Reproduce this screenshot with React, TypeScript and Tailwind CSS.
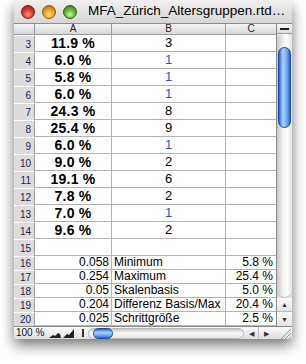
const topRows = [
  { n: 3, a: "11.9 %", b: "3", blue: false },
  { n: 4, a: "6.0 %", b: "1", blue: true },
  { n: 5, a: "5.8 %", b: "1", blue: true },
  { n: 6, a: "6.0 %", b: "1", blue: true },
  { n: 7, a: "24.3 %", b: "8", blue: false },
  { n: 8, a: "25.4 %", b: "9", blue: false },
  { n: 9, a: "6.0 %", b: "1", blue: true },
  { n: 10, a: "9.0 %", b: "2", blue: false },
  { n: 11, a: "19.1 %", b: "6", blue: false },
  { n: 12, a: "7.8 %", b: "2", blue: false },
  { n: 13, a: "7.0 %", b: "1", blue: true },
  { n: 14, a: "9.6 %", b: "2", blue: false },
  { n: 15, a: "", b: "", blue: false },
];

const statRows = [
  { n: 16, a: "0.058", b: "Minimum", c: "5.8 %" },
  { n: 17, a: "0.254", b: "Maximum", c: "25.4 %" },
  { n: 18, a: "0.05", b: "Skalenbasis", c: "5.0 %" },
  { n: 19, a: "0.204", b: "Differenz Basis/Max", c: "20.4 %" },
  { n: 20, a: "0.025", b: "Schrittgröße", c: "2.5 %" },
];

function RowLabel({ n }: { n: number }) {
  return (
    <div className="flex w-[21px] shrink-0 items-center justify-end border-t border-r border-t-white border-r-[#a0a0a0] bg-[#dcdcdc] pr-[3px] text-[10px] text-[#1c1c50]">
      {n}
    </div>
  );
}

function Light({ color }: { color: string }) {
  return <span className={`h-[14px] w-[14px] rounded-full border ${color}`} />;
}

export default function App() {
  return (
    <div className="h-[364px] w-[306px] bg-white pl-[14px] font-['Liberation_Sans',Arial,sans-serif]">
      <div className="flex h-[339px] w-[278px] flex-col overflow-hidden rounded-t-[6px] bg-white shadow-[0_6px_14px_rgba(0,0,0,0.55)]">
        {/* title bar */}
        <div className="flex h-[24px] shrink-0 items-center border-b border-[#8c8c8c] bg-[linear-gradient(#f0f0f0,#d6d6d6)] pl-[7px]">
          <div className="flex gap-[7px]">
            <Light color="border-[#7a1a14] bg-[radial-gradient(circle_at_50%_70%,#ff9a8a_0%,#e03a2c_45%,#9a1810_100%)]" />
            <Light color="border-[#8a5a10] bg-[radial-gradient(circle_at_50%_70%,#ffe08a_0%,#f0a424_45%,#a06010_100%)]" />
            <Light color="border-[#2e5e10] bg-[radial-gradient(circle_at_50%_70%,#c8f89a_0%,#68b83a_45%,#2e7010_100%)]" />
          </div>
          <span className="ml-[11px] whitespace-nowrap text-[13.5px] text-black">
            MFA_Zürich_Altersgruppen.rtd…
          </span>
        </div>

        <div className="flex min-h-0 flex-1">
          {/* sheet */}
          <div className="flex w-[262px] flex-col">
            <div className="flex h-[11px] shrink-0 border-b border-[#9a9a9a] bg-[linear-gradient(#f4f4f4,#d8d8d8)] text-[10px] leading-[10px] text-[#222]">
              <div className="w-[21px] border-r border-[#9a9a9a]" />
              <div className="w-[77px] border-r border-[#9a9a9a] text-center">A</div>
              <div className="w-[114px] border-r border-[#9a9a9a] text-center">B</div>
              <div className="w-[50px] text-center">C</div>
            </div>
            {topRows.map((r) => (
              <div key={r.n} className="flex h-[17px] shrink-0">
                <RowLabel n={r.n} />
                <div className="flex w-[77px] items-center justify-center border-r border-b border-[#b4b4b4] text-[14px] font-bold tracking-[0.2px] text-black">
                  {r.a}
                </div>
                <div
                  className={`flex w-[114px] items-center justify-center border-r border-b border-[#b4b4b4] text-[13px] ${
                    r.blue ? "text-[#2458b8]" : "text-black"
                  }`}
                >
                  {r.b}
                </div>
                <div className="w-[50px] border-b border-[#b4b4b4]" />
              </div>
            ))}
            {statRows.map((r) => (
              <div key={r.n} className="flex h-[14px] shrink-0 text-[12px] leading-[13px] text-black">
                <RowLabel n={r.n} />
                <div className="flex w-[77px] items-center justify-end border-r border-b border-[#b4b4b4] pr-[2px]">
                  {r.a}
                </div>
                <div className="flex w-[114px] items-center border-r border-b border-[#b4b4b4] pl-[2px] whitespace-nowrap">
                  {r.b}
                </div>
                <div className="flex w-[50px] items-center justify-end border-b border-[#b4b4b4] pr-[3px]">
                  {r.c}
                </div>
              </div>
            ))}
          </div>

          {/* vertical scrollbar */}
          <div className="flex w-[16px] flex-col border-l border-[#8a8a8a] bg-[linear-gradient(to_right,#d8d8d8,#f6f6f6_50%,#e0e0e0)]">
            <div className="flex h-[10px] items-center justify-center border-b border-[#a0a0a0] bg-[linear-gradient(#fafafa,#dcdcdc)]">
              <span className="h-[2px] w-[9px] bg-[#222]" />
            </div>
            <div className="relative flex-1 rounded-b-[8px] rounded-t-[8px] border-b border-[#bcbcbc] bg-[linear-gradient(to_right,#c8c8c8,#f4f4f4_45%,#fdfdfd_70%,#e4e4e4)]">
              <div className="absolute top-[13px] left-[1px] h-[81px] w-[13px] rounded-full border border-[#1a4aa8] bg-[linear-gradient(to_right,#2a5fd0,#a8d2fc_35%,#7ab4f4_65%,#2c62d4)]" />
            </div>
            <div className="flex h-[14px] items-center justify-center border-b border-[#bcbcbc] bg-[linear-gradient(#fbfbfb,#e2e2e2)] text-[7px] leading-none text-[#333]">
              ▲
            </div>
            <div className="flex h-[14px] items-center justify-center bg-[linear-gradient(#fbfbfb,#e2e2e2)] text-[7px] leading-none text-[#333]">
              ▼
            </div>
          </div>
        </div>

        {/* bottom bar */}
        <div className="flex h-[13px] shrink-0 items-center overflow-hidden border-t border-[#8a8a8a] bg-[linear-gradient(#fafafa,#dedede)]">
          <span className="ml-[2px] whitespace-nowrap text-[10px] leading-none text-[#111]">100 %</span>
          <svg width="28" height="9" viewBox="0 0 28 9" className="ml-[5px] shrink-0">
            <path d="M0 9 L4 6 L6 7 L9 4 L11 5 L12 9 Z" fill="#222" />
            <path d="M14 9 L18 5 L20 6 L25 0 L25 9 Z" fill="#222" />
          </svg>
          <span className="ml-[5px] h-[8px] w-[2px] shrink-0 bg-[#333]" />
          <div className="relative ml-[4px] h-[11px] w-[156px] shrink-0 rounded-full border border-[#b8b8b8] bg-[linear-gradient(#c8c8c8,#f8f8f8_45%,#e6e6e6)]">
            <div className="absolute top-[-1px] left-[4px] h-[11px] w-[20px] rounded-full border border-[#1a4aa8] bg-[linear-gradient(#2a5fd0,#a8d2fc_35%,#7ab4f4_65%,#2c62d4)]" />
          </div>
          <div className="flex h-full w-[15px] shrink-0 items-center justify-center border-r border-[#bcbcbc] text-[7px] leading-none text-[#333]">
            ◀
          </div>
          <div className="flex h-full w-[15px] shrink-0 items-center justify-center text-[7px] leading-none text-[#333]">
            ▶
          </div>
          <svg width="16" height="12" viewBox="0 0 16 12" className="ml-auto shrink-0">
            <path d="M5 12 L15 2 M9 12 L15 6 M13 12 L15 10" stroke="#999" strokeWidth="1" />
          </svg>
        </div>
      </div>
    </div>
  );
}
